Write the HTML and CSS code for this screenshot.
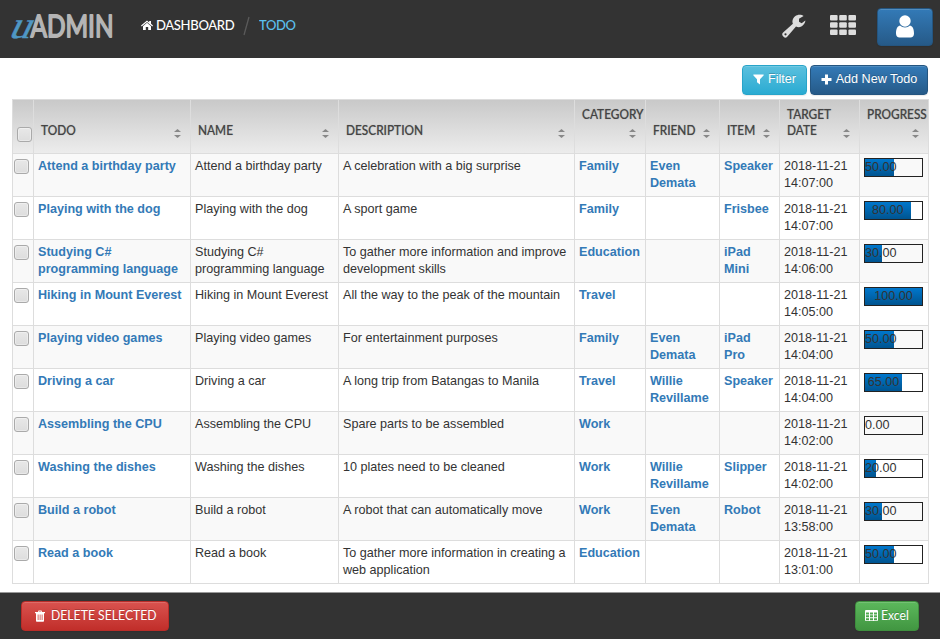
FILE: index.html
```html
<!DOCTYPE html>
<html lang="en">
<head>
<meta charset="utf-8">
<title>Todo - uAdmin</title>
<link rel="stylesheet" href="styles.css">
</head>
<body>
<header class="topbar">
  <svg class="logo" width="112" height="36" viewBox="0 0 112 36" role="img" aria-label="uAdmin">
    <text class="logo-u" transform="translate(7.500 27.500) skewX(-26)" textLength="21" lengthAdjust="spacingAndGlyphs">u</text>
    <text class="logo-name" x="30.500" y="27" textLength="83" lengthAdjust="spacingAndGlyphs">ADMIN</text>
  </svg>
  <nav class="crumbs">
    <a class="crumb" href="#"><svg class="home" width="12" height="11" viewBox="0 0 12 11"><path d="M6 2.8 10 6.2V10H7.2V7H4.8v3H2V6.2zM0 5.6 6 .5l2.2 1.9V1H10v2.8l2 1.8-.7.8L6 2 .7 6.400z"/></svg><span class="crumb-text">DASHBOARD</span></a>
    <svg class="slash" width="8" height="20" viewBox="0 0 8 20"><path d="M1 19 6 1"/></svg>
    <span class="crumb-current">TODO</span>
  </nav>
  <div class="tools">
    <svg class="wrench" width="24" height="25" viewBox="0 0 24 25"><path fill-rule="evenodd" d="M23.300 6.500c.3 2.500-2.600 6.700-6.600 6.700-1 0-1.900-.2-2.700-.6L5.200 22.700c-1 1.200-2.400 1.300-3.400.3L.900 22c-1-1-.9-2.400.2-3.400l9.800-8.900c-.5-1-.6-2.200-.3-3.400C11.400 3 14.300.8 17.500.8c1.600 0 3.200.5 4.100 1.200L17 4.700v3.100l2.700 1.500zM3.500 19.200a1.100 1.100 0 1 0 0 2.200 1.100 1.100 0 0 0 0-2.200z"/></svg>
    <svg class="grid" width="26" height="20" viewBox="0 0 26 20"><rect width="7.600" height="5.600" rx="1"/><rect x="9.200" width="7.600" height="5.600" rx="1"/><rect x="18.400" width="7.600" height="5.600" rx="1"/><rect y="7.200" width="7.600" height="5.600" rx="1"/><rect x="9.200" y="7.200" width="7.600" height="5.600" rx="1"/><rect x="18.400" y="7.200" width="7.600" height="5.600" rx="1"/><rect y="14.400" width="7.600" height="5.600" rx="1"/><rect x="9.200" y="14.400" width="7.600" height="5.600" rx="1"/><rect x="18.400" y="14.400" width="7.600" height="5.600" rx="1"/></svg>
    <button class="btn btn-primary btn-user" aria-label="Account"><svg width="18" height="23" viewBox="0 0 18 23"><path d="M4 10.500C1 11.300 0 14.500 0 18.500 0 21 1.500 22.500 3.500 22.500h11c2 0 3.500-1.500 3.500-4 0-4-1-7.200-4-8-1.400 1.300-3 2-5 2s-3.600-.7-5-2z"/><circle cx="9" cy="6" r="5.700"/></svg></button>
  </div>
</header>
<main class="content">
  <div class="actions">
    <button class="btn btn-info btn-filter"><svg width="11" height="11" viewBox="0 0 11 11"><path d="M.5.500h10q.5.500 0 1L7 5.300v5.200L4 8.300v-3L.5 1.500Q0 1 .5.500z"/></svg><span>Filter</span></button>
    <button class="btn btn-primary btn-add"><svg width="11" height="11" viewBox="0 0 11 11"><path d="M4 .5h3V4h3.500v3H7v3.500H4V7H.5V4H4z"/></svg><span>Add New Todo</span></button>
  </div>
  <table class="list">
    <colgroup><col class="c-check"><col class="c-todo"><col class="c-name"><col class="c-desc"><col class="c-cat"><col class="c-friend"><col class="c-item"><col class="c-date"><col class="c-prog"></colgroup>
    <thead>
      <tr>
        <th class="th-check"><span class="check"></span></th>
        <th><div class="head"><span class="label">TODO</span><i class="sort"></i></div></th>
        <th><div class="head"><span class="label">NAME</span><i class="sort"></i></div></th>
        <th><div class="head"><span class="label">DESCRIPTION</span><i class="sort"></i></div></th>
        <th><div class="head stacked"><span class="label">CATEGORY</span><i class="sort"></i></div></th>
        <th><div class="head"><span class="label">FRIEND</span><i class="sort"></i></div></th>
        <th><div class="head"><span class="label">ITEM</span><i class="sort"></i></div></th>
        <th><div class="head"><span class="label">TARGET<br>DATE</span><i class="sort"></i></div></th>
        <th><div class="head stacked"><span class="label">PROGRESS</span><i class="sort"></i></div></th>
      </tr>
    </thead>
    <tbody>
      <tr><td><span class="check"></span></td><td><a href="#">Attend a birthday party</a></td><td>Attend a birthday party</td><td>A celebration with a big surprise</td><td><a href="#">Family</a></td><td><a href="#">Even Demata</a></td><td><a href="#">Speaker</a></td><td>2018-11-21 14:07:00</td><td><div class="meter"><div class="fill" style="width:50%">50.00</div></div></td></tr>
      <tr><td><span class="check"></span></td><td><a href="#">Playing with the dog</a></td><td>Playing with the dog</td><td>A sport game</td><td><a href="#">Family</a></td><td></td><td><a href="#">Frisbee</a></td><td>2018-11-21 14:07:00</td><td><div class="meter"><div class="fill" style="width:80%">80.00</div></div></td></tr>
      <tr><td><span class="check"></span></td><td><a href="#">Studying C# programming language</a></td><td>Studying C# programming language</td><td>To gather more information and improve development skills</td><td><a href="#">Education</a></td><td></td><td><a href="#">iPad<br>Mini</a></td><td>2018-11-21 14:06:00</td><td><div class="meter"><div class="fill" style="width:30%">30.00</div></div></td></tr>
      <tr><td><span class="check"></span></td><td><a href="#">Hiking in Mount Everest</a></td><td>Hiking in Mount Everest</td><td>All the way to the peak of the mountain</td><td><a href="#">Travel</a></td><td></td><td></td><td>2018-11-21 14:05:00</td><td><div class="meter"><div class="fill" style="width:100%">100.00</div></div></td></tr>
      <tr><td><span class="check"></span></td><td><a href="#">Playing video games</a></td><td>Playing video games</td><td>For entertainment purposes</td><td><a href="#">Family</a></td><td><a href="#">Even Demata</a></td><td><a href="#">iPad<br>Pro</a></td><td>2018-11-21 14:04:00</td><td><div class="meter"><div class="fill" style="width:50%">50.00</div></div></td></tr>
      <tr><td><span class="check"></span></td><td><a href="#">Driving a car</a></td><td>Driving a car</td><td>A long trip from Batangas to Manila</td><td><a href="#">Travel</a></td><td><a href="#">Willie Revillame</a></td><td><a href="#">Speaker</a></td><td>2018-11-21 14:04:00</td><td><div class="meter"><div class="fill" style="width:65%">65.00</div></div></td></tr>
      <tr><td><span class="check"></span></td><td><a href="#">Assembling the CPU</a></td><td>Assembling the CPU</td><td>Spare parts to be assembled</td><td><a href="#">Work</a></td><td></td><td></td><td>2018-11-21 14:02:00</td><td><div class="meter"><div class="fill" style="width:0%">0.00</div></div></td></tr>
      <tr><td><span class="check"></span></td><td><a href="#">Washing the dishes</a></td><td>Washing the dishes</td><td>10 plates need to be cleaned</td><td><a href="#">Work</a></td><td><a href="#">Willie Revillame</a></td><td><a href="#">Slipper</a></td><td>2018-11-21 14:02:00</td><td><div class="meter"><div class="fill" style="width:20%">20.00</div></div></td></tr>
      <tr><td><span class="check"></span></td><td><a href="#">Build a robot</a></td><td>Build a robot</td><td>A robot that can automatically move</td><td><a href="#">Work</a></td><td><a href="#">Even Demata</a></td><td><a href="#">Robot</a></td><td>2018-11-21 13:58:00</td><td><div class="meter"><div class="fill" style="width:30%">30.00</div></div></td></tr>
      <tr><td><span class="check"></span></td><td><a href="#">Read a book</a></td><td>Read a book</td><td>To gather more information in creating a web application</td><td><a href="#">Education</a></td><td></td><td></td><td>2018-11-21 13:01:00</td><td><div class="meter"><div class="fill" style="width:50%">50.00</div></div></td></tr>
    </tbody>
  </table>
</main>
<footer class="bottombar">
  <button class="btn btn-danger"><svg width="10" height="12" viewBox="0 0 10 12"><path fill-rule="evenodd" d="M0 2h3l.5-1.500h3L7 2h3v1.200H9V11q0 .8-.8.8H1.800Q1 11.800 1 11V3.200H0zM4 2h2l-.2-.6H4.200zM2.700 4.500V10h.8V4.500zm2 0V10h.8V4.500zm2 0V10h.8V4.500z"/></svg><span>DELETE SELECTED</span></button>
  <button class="btn btn-success"><svg width="13" height="11" viewBox="0 0 13 11"><path fill-rule="evenodd" d="M1 0h11q1 0 1 1v9q0 1-1 1H1q-1 0-1-1V1q0-1 1-1zM1 2.400v2h3v-2zm4 0v2h3v-2zm4 0v2h3v-2zM1 5.300v2h3v-2zm4 0v2h3v-2zm4 0v2h3v-2zM1 8.200v2h3v-2zm4 0v2h3v-2zm4 0v2h3v-2z"/></svg><span>Excel</span></button>
</footer>
</body>
</html>
```
FILE: styles.css
```css
* { box-sizing: border-box; }
body {
  margin: 0;
  height: 639px;
  display: flex;
  flex-direction: column;
  overflow: hidden;
  background: #fff;
  color: #333;
  font: 12.6px/17px "Liberation Sans", Arial, sans-serif;
}
a { color: #337ab7; text-decoration: none; }
svg { display: block; flex: none; }

.topbar {
  height: 58px;
  flex: none;
  display: flex;
  background: #333;
}
.logo { margin-top: 10px; overflow: visible; }
.logo-u { font: 38px "Liberation Serif", serif; fill: #4f97c4; stroke: #4f97c4; stroke-width: .5; }
.logo-name {
  font: 31px Lato, sans-serif;
  fill: #b5b5b5;
  stroke: #b5b5b5;
  stroke-width: 1.8;
  stroke-linejoin: round;
}
.crumbs {
  display: flex;
  align-items: center;
  height: 50px;
  margin-left: 29px;
  font: 500 14px/20px Lato, sans-serif;
}
.crumb { display: flex; align-items: center; gap: 3px; color: #fff; }
.crumb-text { width: 78px; white-space: nowrap; transform: scaleX(.935); transform-origin: 0 50%; letter-spacing: -0.4px; }
.home { fill: #fff; }
.slash { margin: 2px 8px 0 9px; fill: none; stroke: #5a5a5a; stroke-width: 1.3; }
.crumb-current { color: #5bc0ee; transform: scaleX(.93); transform-origin: 0 50%; letter-spacing: -0.4px; }
.tools { display: flex; margin: 8px 7px 0 auto; }
.wrench { margin: 6px 24px 0 0; fill: #ddd; }
.grid { margin: 7px 21px 0 0; fill: #ddd; }

.btn {
  display: flex;
  align-items: center;
  justify-content: center;
  gap: 4px;
  height: 30px;
  padding: 0 0 2px;
  border: 1px solid;
  border-radius: 4px;
  color: #fff;
  font: 12.6px/18px "Liberation Sans", Arial, sans-serif;
  text-shadow: 0 -1px 0 rgba(0, 0, 0, .2);
  box-shadow: inset 0 1px 0 rgba(255, 255, 255, .15), 0 1px 1px rgba(0, 0, 0, .08);
  white-space: nowrap;
}
.btn svg { fill: #fff; }
.btn-primary { background: linear-gradient(#337ab7, #265a88); border-color: #245580; }
.btn-info { background: linear-gradient(#5bc0de, #2aabd2); border-color: #28a4c9; }
.btn-danger { background: linear-gradient(#d9534f, #c12e2a); border-color: #b92c28; }
.btn-success { background: linear-gradient(#5cb85c, #419641); border-color: #3e8f3e; }
.btn-user { width: 56px; height: 38px; }
.btn-filter { width: 65px; }
.btn-add { width: 118px; }

.content { height: 534px; flex: none; padding: 7px 11px 0 12px; }
.actions { display: flex; justify-content: flex-end; gap: 3px; height: 34px; padding-right: 1px; }

.list {
  width: 917px;
  table-layout: fixed;
  border-collapse: separate;
  border-spacing: 0;
  border-left: 1px solid #ddd;
}
.c-check { width: 21px; }
.c-todo { width: 157px; }
.c-name { width: 148px; }
.c-desc { width: 236px; }
.c-cat { width: 71px; }
.c-friend { width: 74px; }
.c-item { width: 60px; }
.c-date { width: 80px; }
.c-prog { width: 69px; }
.list thead tr { background: linear-gradient(#c8c8c8, #ededed); }
.list th {
  height: 55px;
  padding: 0 9px 15px 7px;
  border: solid #ddd;
  border-width: 1px 1px 1px 0;
  vertical-align: bottom;
  text-align: left;
  color: #444;
  font: 500 13px/16px Lato, sans-serif;
  text-shadow: 0 0 1px rgba(0, 0, 0, .35);
}
.list .th-check { padding: 0 0 11px 4px; }
.head { display: flex; align-items: flex-end; justify-content: space-between; white-space: nowrap; }
.label { transform: scaleX(.91); transform-origin: 0 50%; }
.stacked { flex-direction: column; align-items: stretch; }
.stacked .sort { margin: 7px 0 0 auto; }
.sort { display: grid; gap: 3px; width: 7px; height: 9px; flex: none; }
.sort::before, .sort::after { content: ""; height: 3px; background: #888; }
.sort::before { clip-path: polygon(50% 0, 100% 100%, 0 100%); }
.sort::after { clip-path: polygon(0 0, 100% 0, 50% 100%); }
.list td {
  height: 43px;
  padding: 4px 4px 4px;
  border: solid #ddd;
  border-width: 0 1px 1px 0;
  vertical-align: top;
}
.list tbody tr:nth-child(odd) { background: #f9f9f9; }
.list td:first-child { padding: 5px 0 0 1px; }
.list td a { font-weight: bold; }
.check {
  display: block;
  width: 15px;
  height: 15px;
  border: 1px solid #aaa;
  border-radius: 3px;
  background: linear-gradient(#e8e8e8, #ddd);
  box-shadow: inset 0 0 0 1px rgba(255, 255, 255, .35);
}
.meter { width: 59px; height: 19px; border: 1px solid #222; }
.fill {
  height: 17px;
  line-height: 17px;
  text-align: center;
  background: linear-gradient(#0077cc, #005490);
}

.bottombar {
  flex: 1;
  display: flex;
  align-items: flex-start;
  justify-content: space-between;
  padding: 8px 21px 0;
  border-top: 1px solid #999;
  background: #333;
}
.bottombar .btn { font-family: Lato, sans-serif; padding-bottom: 1px; }
.bottombar .btn span { transform: scaleX(.97); transform-origin: 0 50%; }
.bottombar .btn-danger { width: 148px; gap: 6px; padding-left: 4px; }
.btn-success { width: 64px; gap: 3px; }
```
